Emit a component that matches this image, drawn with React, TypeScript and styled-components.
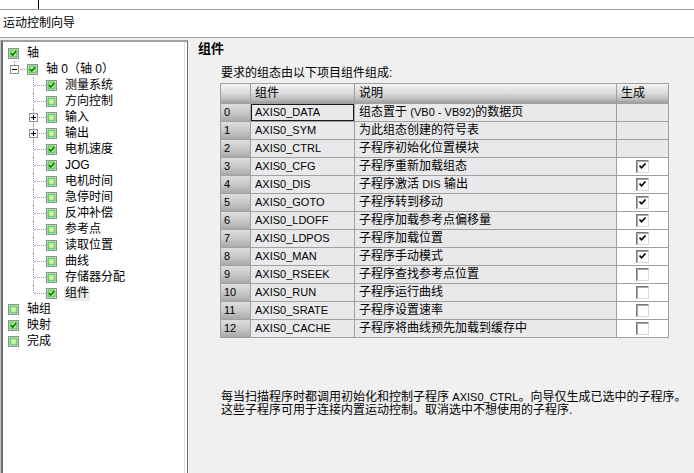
import React from 'react';
import styled, { createGlobalStyle } from 'styled-components';

const GlobalStyle = createGlobalStyle`
  html, body {
    margin: 0;
    padding: 0;
    background: #f0f0f0;
  }
  body {
    font-family: 'Liberation Sans', 'Noto Sans CJK SC', sans-serif;
    font-size: 12px;
    color: #000;
  }
`;

// 英文部分字号略小
const Latin = styled.span`
  font-size: 11px;
`;

interface TreeItem {
  label: string;
  level: 0 | 1 | 2;
  checked?: boolean;
  expander?: 'plus' | 'minus';
  last?: boolean;
  selected?: boolean;
}

const tree: TreeItem[] = [
  { label: '轴', level: 0, checked: true },
  { label: '轴 0（轴 0）', level: 1, checked: true, expander: 'minus', last: true },
  { label: '测量系统', level: 2, checked: true },
  { label: '方向控制', level: 2 },
  { label: '输入', level: 2, expander: 'plus' },
  { label: '输出', level: 2, expander: 'plus' },
  { label: '电机速度', level: 2, checked: true },
  { label: 'JOG', level: 2, checked: true },
  { label: '电机时间', level: 2 },
  { label: '急停时间', level: 2 },
  { label: '反冲补偿', level: 2 },
  { label: '参考点', level: 2 },
  { label: '读取位置', level: 2 },
  { label: '曲线', level: 2 },
  { label: '存储器分配', level: 2 },
  { label: '组件', level: 2, checked: true, last: true, selected: true },
  { label: '轴组', level: 0 },
  { label: '映射', level: 0, checked: true },
  { label: '完成', level: 0 },
];

interface Part {
  name: string;
  desc: React.ReactNode;
  gen?: boolean; // undefined = 无复选框
}

const parts: Part[] = [
  { name: 'AXIS0_DATA', desc: <>组态置于 <Latin>(VB0 - VB92)</Latin>的数据页</> },
  { name: 'AXIS0_SYM', desc: '为此组态创建的符号表' },
  { name: 'AXIS0_CTRL', desc: '子程序初始化位置模块' },
  { name: 'AXIS0_CFG', desc: '子程序重新加载组态', gen: true },
  { name: 'AXIS0_DIS', desc: <>子程序激活 <Latin>DIS</Latin> 输出</>, gen: true },
  { name: 'AXIS0_GOTO', desc: '子程序转到移动', gen: true },
  { name: 'AXIS0_LDOFF', desc: '子程序加载参考点偏移量', gen: true },
  { name: 'AXIS0_LDPOS', desc: '子程序加载位置', gen: true },
  { name: 'AXIS0_MAN', desc: '子程序手动模式', gen: true },
  { name: 'AXIS0_RSEEK', desc: '子程序查找参考点位置', gen: false },
  { name: 'AXIS0_RUN', desc: '子程序运行曲线', gen: false },
  { name: 'AXIS0_SRATE', desc: '子程序设置速率', gen: false },
  { name: 'AXIS0_CACHE', desc: '子程序将曲线预先加载到缓存中', gen: false },
];

const GreenBox = ({ checked }: { checked?: boolean }) => (
  <svg width="11" height="11" viewBox="0 0 11 11" style={{ flexShrink: 0 }}>
    <rect x="0.5" y="0.5" width="10" height="10" fill="#fff" stroke="#8e8e8e" />
    <rect x="2" y="2" width="7" height="7" fill="#9fe88a" stroke="#38c038" strokeWidth="1" />
    <rect x="3.5" y="3.5" width="4" height="4" fill="#c9f7b8" />
    {checked && (
      <polyline points="3,5 4.8,7 8,3.3" fill="none" stroke="#0a6e0a" strokeWidth="1.6" />
    )}
  </svg>
);

const Expander = ({ kind }: { kind: 'plus' | 'minus' }) => (
  <ExpanderBox width="9" height="9" viewBox="0 0 9 9">
    <rect x="0.5" y="0.5" width="8" height="8" fill="#fff" stroke="#8f8f8f" />
    <line x1="2" y1="4.5" x2="7" y2="4.5" stroke="#000" />
    {kind === 'plus' && <line x1="4.5" y1="2" x2="4.5" y2="7" stroke="#000" />}
  </ExpanderBox>
);

const TickBox = ({ checked }: { checked: boolean }) => (
  <Tick>
    {checked && (
      <svg width="9" height="9" viewBox="0 0 9 9">
        <polyline points="1.5,3.5 3.5,5.8 7.5,1.5" fill="none" stroke="#000" strokeWidth="1.7" />
      </svg>
    )}
  </Tick>
);

export default function App() {
  return (
    <>
      <GlobalStyle />
      <Page>
        <TopStrip>
          <Caret />
        </TopStrip>
        <TitleBar>运动控制向导</TitleBar>
        <Body>
          <TreePanel>
            {tree.map(item => (
              <TreeRow key={item.label}>
                {item.level === 2 && <Spacer />}
                {item.level > 0 && (
                  <Connector $last={item.last}>
                    {item.expander && <Expander kind={item.expander} />}
                  </Connector>
                )}
                <GreenBox checked={item.checked} />
                <TreeLabel $selected={item.selected}>{item.label}</TreeLabel>
              </TreeRow>
            ))}
          </TreePanel>

          <ContentPane>
            <Heading>组件</Heading>
            <Intro>要求的组态由以下项目组件组成:</Intro>
            <Grid>
              <HeadCell />
              <HeadCell>组件</HeadCell>
              <HeadCell>说明</HeadCell>
              <HeadCell>生成</HeadCell>
              {parts.map((p, i) => (
                <React.Fragment key={p.name}>
                  <IndexCell>{i}</IndexCell>
                  <NameCell $focused={i === 0}>{p.name}</NameCell>
                  <Cell>{p.desc}</Cell>
                  <GenCell $white={p.gen !== undefined}>
                    {p.gen !== undefined && <TickBox checked={p.gen} />}
                  </GenCell>
                </React.Fragment>
              ))}
            </Grid>
            <Note>
              每当扫描程序时都调用初始化和控制子程序 <Latin>AXIS0_CTRL</Latin>。向导仅生成已选中的子程序。
              <br />
              这些子程序可用于连接内置运动控制。取消选中不想使用的子程序.
            </Note>
          </ContentPane>
        </Body>
      </Page>
    </>
  );
}

const Page = styled.div`
  display: flex;
  flex-direction: column;
  min-height: 100vh;
  overflow: hidden;
`;

const TopStrip = styled.div`
  height: 9px;
  background: #fff;
  border-bottom: 1px solid #a0a0a0;
  padding-left: 38px;
`;

const Caret = styled.div`
  width: 1px;
  height: 9px;
  background: #000;
`;

const TitleBar = styled.div`
  height: 27px;
  line-height: 27px;
  padding-left: 3px;
  background: #fff;
  border-bottom: 1px solid #a0a0a0;
  font-size: 12px;
`;

const Body = styled.div`
  flex: 1;
  display: flex;
  align-items: stretch;
  background: #f0f0f0;
  padding-top: 2px;
`;

const TreePanel = styled.div`
  width: 184px;
  margin-left: 1px;
  padding-top: 3px;
  background: #fff;
  border-top: 2px solid #a0a0a0;
  border-left: 2px solid #6c6c6c;
  border-right: 1px solid #6a6a6a;
  box-shadow: -1px 0 0 #c4c4c4, inset -2px 0 0 #fff, inset -3px 0 0 #dcdcdc;
`;

const TreeRow = styled.div`
  display: flex;
  align-items: center;
  height: 16px;
  padding-left: 5px;
`;

const Spacer = styled.span`
  width: 19px;
  height: 16px;
  flex-shrink: 0;
`;

const Connector = styled.span<{ $last?: boolean }>`
  position: relative;
  width: 19px;
  height: 16px;
  flex-shrink: 0;

  &::before {
    content: '';
    position: absolute;
    left: 6px;
    top: 0;
    height: ${p => (p.$last ? '8px' : '16px')};
    border-left: 1px dotted #a0a0a0;
  }
  &::after {
    content: '';
    position: absolute;
    left: 7px;
    top: 8px;
    width: 12px;
    border-top: 1px dotted #a0a0a0;
  }
`;

const ExpanderBox = styled.svg`
  position: absolute;
  left: 2px;
  top: 4px;
  z-index: 1;
`;

const TreeLabel = styled.span<{ $selected?: boolean }>`
  margin-left: 7px;
  padding: 0 1px;
  font-size: 12px;
  line-height: 15px;
  white-space: nowrap;
  background: ${p => (p.$selected ? '#ebebeb' : 'transparent')};
`;

const ContentPane = styled.div`
  flex: 1;
  padding: 1px 0 0 10px;
`;

const Heading = styled.div`
  font-size: 13px;
  font-weight: bold;
  line-height: 16px;
`;

const Intro = styled.div`
  margin: 8px 0 2px 23px;
  line-height: 16px;
`;

const Grid = styled.div`
  display: grid;
  grid-template-columns: 29px 103px 261px 51px;
  grid-template-rows: 19px;
  grid-auto-rows: 17px;
  gap: 1px;
  padding: 1px;
  width: fit-content;
  margin-left: 22px;
  background: #a0a0a0;
`;

const HeadCell = styled.div`
  padding-left: 4px;
  line-height: 19px;
  font-size: 12px;
  background: linear-gradient(to bottom, #f3f3f3 0%, #dcdcdc 45%, #bdbdbd 80%, #9d9d9d 100%);
`;

const IndexCell = styled.div`
  padding-left: 3px;
  line-height: 17px;
  font-size: 11px;
  background: linear-gradient(to bottom, #dedede 0%, #c8c8c8 50%, #a9a9a9 100%);
`;

const Cell = styled.div`
  padding-left: 4px;
  line-height: 17px;
  white-space: nowrap;
  background: #e9e9eb;
`;

const NameCell = styled(Cell)<{ $focused?: boolean }>`
  font-size: 11px;
  box-shadow: ${p => (p.$focused ? 'inset 0 0 0 1px #1a1a1a' : 'none')};
`;

const GenCell = styled.div<{ $white?: boolean }>`
  display: flex;
  align-items: center;
  justify-content: center;
  background: ${p => (p.$white ? '#fff' : '#e9e9eb')};
`;

const Tick = styled.span`
  box-sizing: border-box;
  width: 13px;
  height: 13px;
  display: flex;
  align-items: center;
  justify-content: center;
  background: #fff;
  border-top: 1px solid #7a7a7a;
  border-left: 1px solid #7a7a7a;
  border-right: 1px solid #dadada;
  border-bottom: 1px solid #dadada;
  box-shadow: inset 1px 1px 0 #a6a6a6;
`;

const Note = styled.div`
  margin: 53px 0 0 23px;
  line-height: 13px;
  white-space: nowrap;
`;
